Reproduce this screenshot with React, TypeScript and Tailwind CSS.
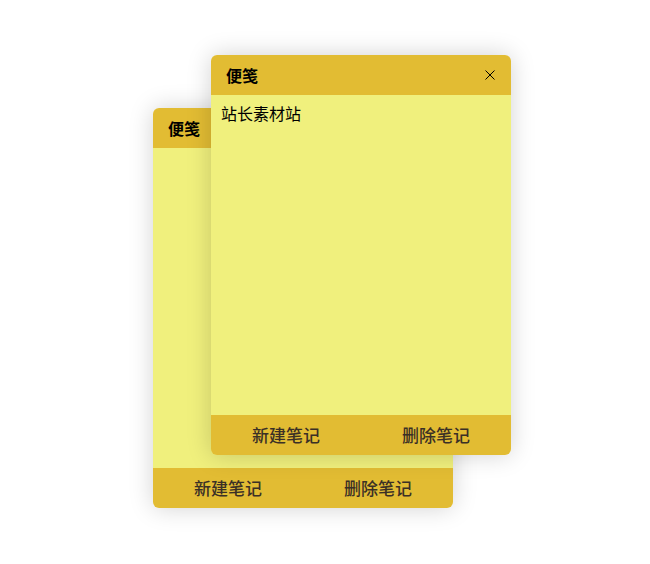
import React from "react";

function Note({ x, y, text, front }: { x: number; y: number; text?: string; front?: boolean }) {
  return (
    <div
      className="absolute w-[300px] h-[400px] rounded-[6px] overflow-hidden flex flex-col shadow-[0_0_24px_rgba(0,0,0,0.18)]"
      style={{ left: x, top: y }}
    >
      <div className="h-[40px] bg-[#e2bc33] flex items-center justify-between pl-[15px] pr-[16px] shrink-0">
        <span className="text-[16px] font-semibold text-black">便笺</span>
        {front && (
          <svg width="10" height="10" viewBox="0 0 10 10" className="text-black">
            <path d="M0.5 0.5L9.5 9.5M9.5 0.5L0.5 9.5" stroke="currentColor" strokeWidth="1" />
          </svg>
        )}
      </div>
      <div className="flex-1 bg-[#f0f07d] px-[10px] pt-[7px] text-[16px] text-black leading-[22px]">
        {text}
      </div>
      <div className="h-[40px] bg-[#e2bc33] flex shrink-0">
        <button className="flex-1 flex items-center justify-center text-[17px] font-medium text-[#3b3026]">新建笔记</button>
        <button className="flex-1 flex items-center justify-center text-[17px] font-medium text-[#3b3026]">删除笔记</button>
      </div>
    </div>
  );
}

export default function App() {
  return (
    <div
      className="relative w-[650px] h-[564px] bg-white"
      style={{ fontFamily: '"Noto Sans CJK SC", "Noto Sans", sans-serif' }}
    >
      <Note x={153} y={108} />
      <Note x={211} y={55} text="站长素材站" front />
    </div>
  );
}
